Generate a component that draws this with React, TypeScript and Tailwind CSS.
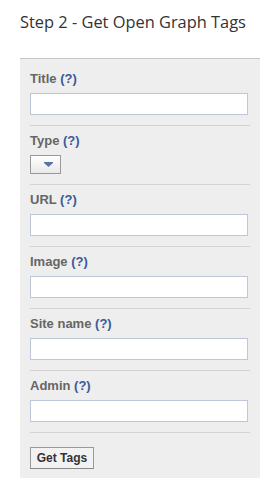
import React from 'react'

const fields = ['Title', 'Type', 'URL', 'Image', 'Site name', 'Admin']

function Label({ text }: { text: string }) {
  return (
    <div className="h-[14px] leading-[14px] text-[13px] font-bold text-[#666666] mb-[7px] whitespace-nowrap">
      {text} <span className="text-[#3b5998]">(?)</span>
    </div>
  )
}

function TypeSelect() {
  return (
    <div className="w-[31px] h-[19px] border border-[#999999] bg-gradient-to-b from-[#ffffff] to-[#e9e9e9] flex items-center justify-end pr-[7px]">
      <svg width="9" height="5" viewBox="0 0 9 5">
        <path d="M0 0H9V1L4.5 5L0 1Z" fill="#5b73a8" />
      </svg>
    </div>
  )
}

export default function App() {
  return (
    <div
      className="w-[273px] h-[488px] bg-white overflow-hidden"
      style={{ fontFamily: '"Liberation Sans", Arial, sans-serif' }}
    >
      <h2
        className="pt-[12px] pl-[20px] h-[32px] leading-[20px] text-[16.4px] text-[#333333] whitespace-nowrap"
        style={{ fontFamily: '"Open Sans", sans-serif' }}
      >
        Step 2 - Get Open Graph Tags
      </h2>

      <div className="ml-[20px] mt-[26px] w-[240px] bg-[#eeeeee] border-t border-[#c8c8c8] px-[10px]">
        {fields.map((f, i) => (
          <div
            key={f}
            className={
              i === 0
                ? 'pt-[13px] pb-[10px]'
                : 'pt-[8px] pb-[10px] border-t border-[#d2d2d2]'
            }
          >
            <Label text={f} />
            {f === 'Type' ? (
              <TypeSelect />
            ) : (
              <input
                type="text"
                className="block w-[218px] h-[22px] border border-[#bdc7d8] bg-white outline-none"
              />
            )}
          </div>
        ))}

        {/* Submit */}
        <div className="pt-[12px] pb-[9px] border-t border-[#d2d2d2]">
          <button className="w-[64px] h-[22px] border border-[#999999] border-b-[#888888] bg-[#f2f2f2] text-[12px] font-bold text-[#333333] leading-[20px]">
            Get Tags
          </button>
        </div>
      </div>
    </div>
  )
}
